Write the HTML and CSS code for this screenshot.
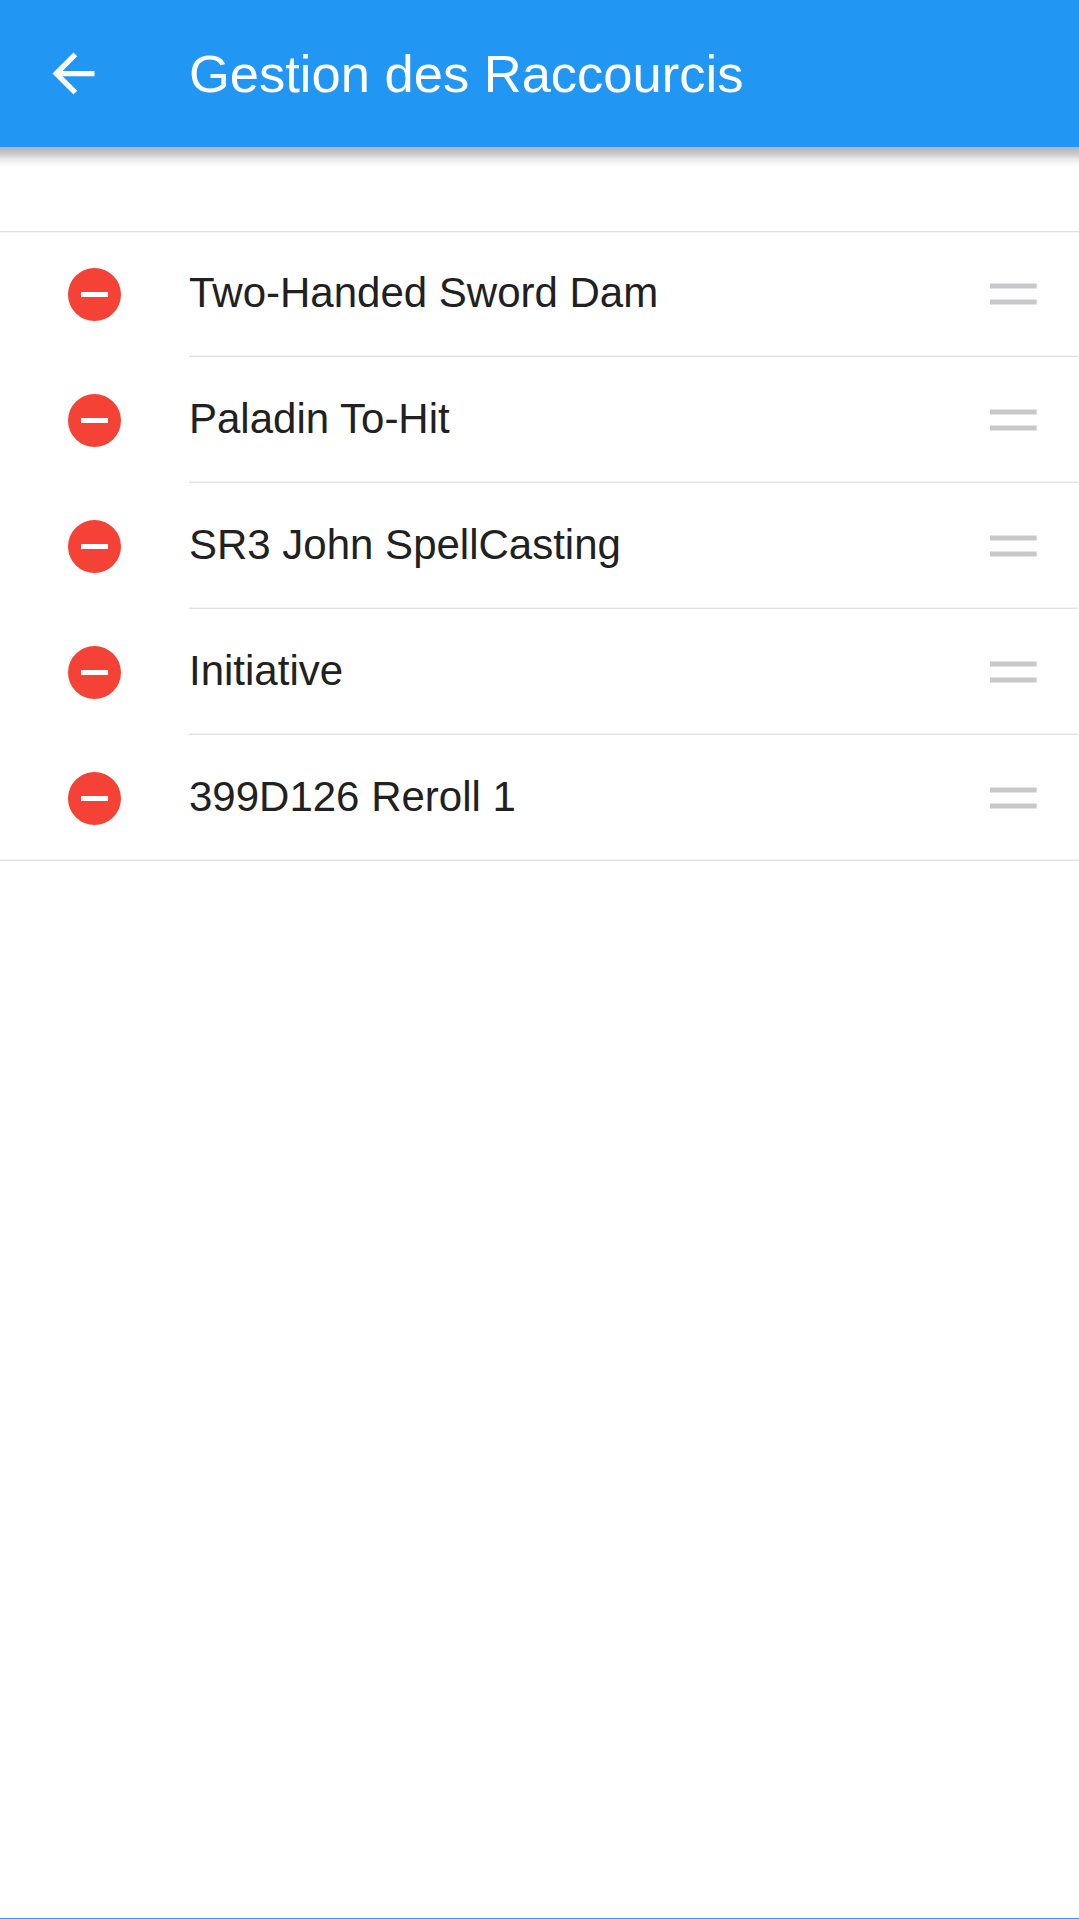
FILE: index.html
```html
<!DOCTYPE html>
<html lang="fr">
<head>
<meta charset="utf-8">
<title>Gestion des Raccourcis</title>
<link rel="stylesheet" href="styles.css">
</head>
<body>
<header class="navbar">
  <svg class="back" viewBox="0 0 24 24"><path d="M20 11H7.83l5.59-5.59L12 4l-8 8 8 8 1.41-1.41L7.83 13H20v-2z"/></svg>
  <h1 class="title">Gestion des Raccourcis</h1>
</header>
<div class="shadow"></div>
<ul class="list">
  <li class="row"><span class="remove"></span><div class="item"><span class="label">Two-Handed Sword Dam</span><svg class="handle" viewBox="0 0 47 22"><path d="M0 .6h46.7v5H0zM0 16.4h46.7v5H0z"/></svg></div></li>
  <li class="row"><span class="remove"></span><div class="item"><span class="label">Paladin To-Hit</span><svg class="handle" viewBox="0 0 47 22"><path d="M0 .6h46.7v5H0zM0 16.4h46.7v5H0z"/></svg></div></li>
  <li class="row"><span class="remove"></span><div class="item"><span class="label">SR3 John SpellCasting</span><svg class="handle" viewBox="0 0 47 22"><path d="M0 .6h46.7v5H0zM0 16.4h46.7v5H0z"/></svg></div></li>
  <li class="row"><span class="remove"></span><div class="item"><span class="label">Initiative</span><svg class="handle" viewBox="0 0 47 22"><path d="M0 .6h46.7v5H0zM0 16.4h46.7v5H0z"/></svg></div></li>
  <li class="row"><span class="remove"></span><div class="item"><span class="label">399D126 Reroll 1</span><svg class="handle" viewBox="0 0 47 22"><path d="M0 .6h46.7v5H0zM0 16.4h46.7v5H0z"/></svg></div></li>
</ul>
<footer class="edge"></footer>
</body>
</html>
```
FILE: styles.css
```css
* { box-sizing: border-box; }
body {
  margin: 0;
  height: 1919px;
  display: flex;
  flex-direction: column;
  background: #fff;
  color: #212121;
  font-family: "Liberation Sans", Arial, sans-serif;
}
.navbar {
  height: 147px;
  display: flex;
  align-items: center;
  padding-left: 42px;
  background: #2196f3;
  color: #fff;
}
.back { width: 63px; height: 63px; fill: #fff; }
.title { margin: 0 0 0 84px; padding-bottom: 1px; font-size: 52.5px; font-weight: 400; line-height: 63px; }
.shadow {
  height: 21px;
  background: linear-gradient(rgba(0, 0, 0, .3), rgba(0, 0, 0, .2) 35%, rgba(0, 0, 0, .08) 60%, rgba(0, 0, 0, 0) 95%);
}
.list {
  list-style: none;
  margin: 63px 0 0;
  padding: 0;
  background:
    linear-gradient(#e0e0e0 50%, #f3f3f3 50%) top / 100% 2px no-repeat,
    linear-gradient(#f3f3f3 50%, #e0e0e0 50%) bottom / 100% 2px no-repeat;
}
.row { height: 126px; display: flex; align-items: center; padding-left: 68px; }
.remove {
  width: 53px;
  height: 53px;
  margin-top: 1px;
  border-radius: 50%;
  display: grid;
  place-items: center;
  background: #f44336;
}
.remove::before { content: ""; width: 27px; height: 5px; background: #fff; }
.item {
  flex: 1;
  height: 126px;
  margin: 0 1px 0 68px;
  padding-right: 41px;
  display: flex;
  align-items: center;
  justify-content: space-between;
  background: linear-gradient(#f3f3f3 50%, #e0e0e0 50%) bottom / 100% 2px no-repeat;
}
.row:last-child .item { background: none; }
.label { padding-bottom: 3px; font-size: 42px; line-height: 63px; }
.handle { width: 47px; height: 22px; fill: #c7c7cc; }
.edge { height: 1px; margin-top: auto; background: #3d97e0; }
```
